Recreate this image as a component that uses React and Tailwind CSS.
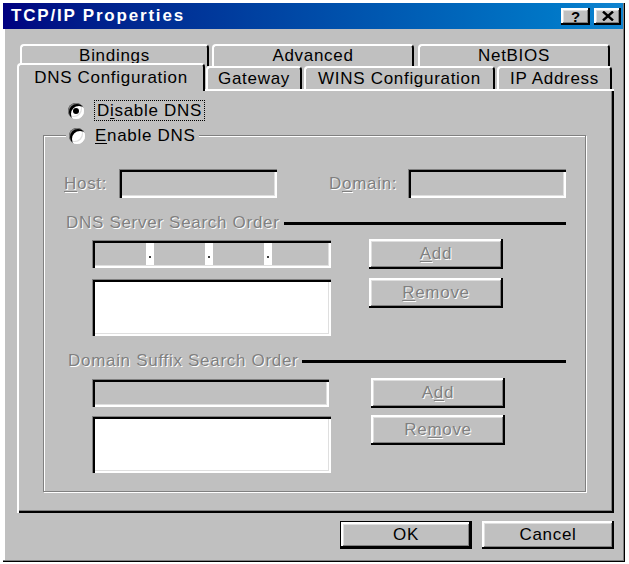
import React from "react";

const raised =
  "bg-[#c0c0c0] shadow-[inset_-2px_-2px_0_#000,inset_2px_2px_0_#fff,inset_-3px_-3px_0_#808080,inset_3px_3px_0_#dfdfdf]";
const sunken =
  "shadow-[inset_1px_1px_0_#808080,inset_3px_3px_0_#000,inset_-2px_-2px_0_#fff,inset_-3px_-3px_0_#dfdfdf]";
const dim = "text-[#808080] [text-shadow:1px_1px_0_#fff]";

function Tab({ label, className, selected }) {
  return (
    <div
      className={`${className} relative flex items-center justify-center bg-[#c0c0c0] rounded-t-[4px] border-t-2 border-l-2 border-r-2 border-t-white border-l-white border-r-black ${
        selected ? "h-[28px] z-10" : "h-[23px] mb-[2px]"
      }`}
    >
      {label}
    </div>
  );
}

function TopTab({ label, className }) {
  return (
    <div
      className={`${className} h-[22px] flex items-center justify-center bg-[#c0c0c0] rounded-t-[4px] border-t-2 border-l-2 border-r-2 border-t-white border-l-white border-r-black`}
    >
      {label}
    </div>
  );
}

function Radio({ checked }) {
  return (
    <div
      className={`w-[16px] h-[16px] rounded-full bg-white flex items-center justify-center ${sunken}`}
    >
      {checked && <div className="w-[6px] h-[6px] rounded-full bg-black" />}
    </div>
  );
}

function DimButton({ children, className }) {
  return (
    <div
      className={`w-[134px] h-[30px] flex items-center justify-center ${raised} ${dim} ${className}`}
    >
      {children}
    </div>
  );
}

function Heading({ children, className }) {
  return (
    <div className={`flex items-center h-[20px] ${className}`}>
      <span className={`${dim} whitespace-nowrap`}>{children}</span>
      <div className="flex-1 h-[3px] bg-black ml-[4px]" />
    </div>
  );
}

function IpField() {
  return (
    <div className={`w-[239px] h-[28px] flex bg-[#c0c0c0] p-[3px] ${sunken}`}>
      <div className="flex-1" />
      <div className="w-[8px] bg-white flex items-center justify-center">
        <div className="w-[2px] h-[2px] bg-[#404040] mt-[6px]" />
      </div>
      <div className="flex-1" />
      <div className="w-[8px] bg-white flex items-center justify-center">
        <div className="w-[2px] h-[2px] bg-[#404040] mt-[6px]" />
      </div>
      <div className="flex-1" />
      <div className="w-[8px] bg-white flex items-center justify-center">
        <div className="w-[2px] h-[2px] bg-[#404040] mt-[6px]" />
      </div>
      <div className="flex-[1.1]" />
    </div>
  );
}

export default function App() {
  return (
    <div className="w-[629px] h-[564px] bg-white overflow-hidden font-['Liberation_Sans',Arial,sans-serif] text-[17px] tracking-[0.7px] text-black">
      <div className="ml-[3px] pt-[3px]">
        <div className="w-[622px] h-[559px] bg-[#c0c0c0] flex flex-col shadow-[inset_-1px_-1px_0_#000,inset_-2px_-2px_0_#808080,inset_2px_2px_0_#fff]">
          {/* TITLE BAR */}
          <div className="h-[26px] mr-[2px] flex items-center justify-between pl-[8px] pr-[2px] bg-linear-to-r from-[#000080] to-[#1084d0]">
            <span className="text-white font-bold tracking-[1.8px]">TCP/IP Properties</span>
            <div className="flex gap-[4px]">
              <div className={`w-[29px] h-[17px] flex items-center justify-center ${raised}`}>
                <span className="font-bold text-[15px] leading-none tracking-normal">?</span>
              </div>
              <div className={`w-[27px] h-[17px] flex items-center justify-center ${raised}`}>
                <svg width="12" height="10" viewBox="0 0 12 10">
                  <path d="M1 0.5 L11 9.5 M11 0.5 L1 9.5" stroke="#000" strokeWidth="2.4" />
                </svg>
              </div>
            </div>
          </div>

          <div className="flex flex-col pl-[14px] pt-[15px]">
            {/* TAB ROWS */}
            <div className="flex ml-[3px]">
              <TopTab label="Bindings" className="w-[189px]" />
              <TopTab label="Advanced" className="w-[202px] ml-[3px]" />
              <TopTab label="NetBIOS" className="w-[192px] ml-[4px]" />
            </div>
            <div className="flex items-end -mt-[3px] relative z-10">
              <Tab label="DNS Configuration" className="w-[188px]" selected />
              <Tab label="Gateway" className="w-[96px] ml-[1px]" />
              <Tab label="WINS Configuration" className="w-[191px] ml-[2px]" />
              <Tab label="IP Address" className="w-[115px] ml-[2px]" />
            </div>

            {/* PANEL */}
            <div className="w-[597px] h-[424px] -mt-[2px] flex flex-col shadow-[inset_2px_2px_0_#fff,inset_-2px_-2px_0_#000,inset_-3px_-3px_0_#808080]">
              <div className="flex items-center h-[21px] mt-[11px] pl-[51px]">
                <Radio checked />
                <div className="ml-[10px] h-[21px] px-[2px] flex items-center border border-dotted border-black">
                  D<span className="underline underline-offset-2">i</span>sable DNS
                </div>
              </div>

              {/* GROUPBOX */}
              <div className="relative ml-[26px] mt-[14px] w-[543px] h-[357px] border border-[#808080] shadow-[inset_1px_1px_0_#fff,1px_1px_0_#fff] flex flex-col pl-[20px] pt-[33px]">
                <div className="absolute -top-[11px] left-[22px] h-[22px] px-[3px] flex items-center bg-[#c0c0c0]">
                  <Radio />
                  <span className="ml-[10px]">
                    <span className="underline underline-offset-2">E</span>nable DNS
                  </span>
                </div>

                <div className="flex items-center h-[29px]">
                  <span className={`w-[55px] ${dim}`}>
                    <span className="underline underline-offset-2">H</span>ost:
                  </span>
                  <div className={`w-[158px] h-[29px] bg-[#c0c0c0] ${sunken}`} />
                  <span className={`ml-[52px] w-[79px] ${dim}`}>
                    D<span className="underline underline-offset-2">o</span>main:
                  </span>
                  <div className={`w-[158px] h-[29px] bg-[#c0c0c0] ${sunken}`} />
                </div>

                <Heading className="mt-[15px] pl-[2px] w-[502px]">DNS Server Search Order</Heading>

                <div className="flex items-start mt-[7px] ml-[28px]">
                  <div className="flex flex-col">
                    <IpField />
                    <div className={`w-[239px] h-[57px] mt-[11px] bg-white ${sunken}`} />
                  </div>
                  <div className="flex flex-col ml-[38px] -mt-[1px]">
                    <DimButton>
                      <span className="underline underline-offset-2">A</span>dd
                    </DimButton>
                    <DimButton className="mt-[9px]">
                      <span className="underline underline-offset-2">R</span>emove
                    </DimButton>
                  </div>
                </div>

                <Heading className="mt-[15px] pl-[4px] w-[502px]">Domain Suffix Search Order</Heading>

                <div className="flex items-start mt-[8px] ml-[28px]">
                  <div className="flex flex-col">
                    <div className={`w-[237px] h-[28px] bg-[#c0c0c0] ${sunken}`} />
                    <div className={`w-[239px] h-[57px] mt-[9px] bg-white ${sunken}`} />
                  </div>
                  <div className="flex flex-col ml-[38px] -mt-[1px]">
                    <DimButton className="ml-[2px]">
                      A<span className="underline underline-offset-2">d</span>d
                    </DimButton>
                    <DimButton className="ml-[2px] mt-[7px]">
                      Re<span className="underline underline-offset-2">m</span>ove
                    </DimButton>
                  </div>
                </div>
              </div>
            </div>

            {/* OK / CANCEL */}
            <div className="w-[597px] flex justify-end gap-[10px] mt-[8px]">
              <div className="w-[132px] h-[28px] border border-black">
                <div className={`w-full h-full flex items-center justify-center ${raised}`}>OK</div>
              </div>
              <div className={`w-[132px] h-[28px] flex items-center justify-center ${raised}`}>
                Cancel
              </div>
            </div>
          </div>
        </div>
      </div>
    </div>
  );
}
